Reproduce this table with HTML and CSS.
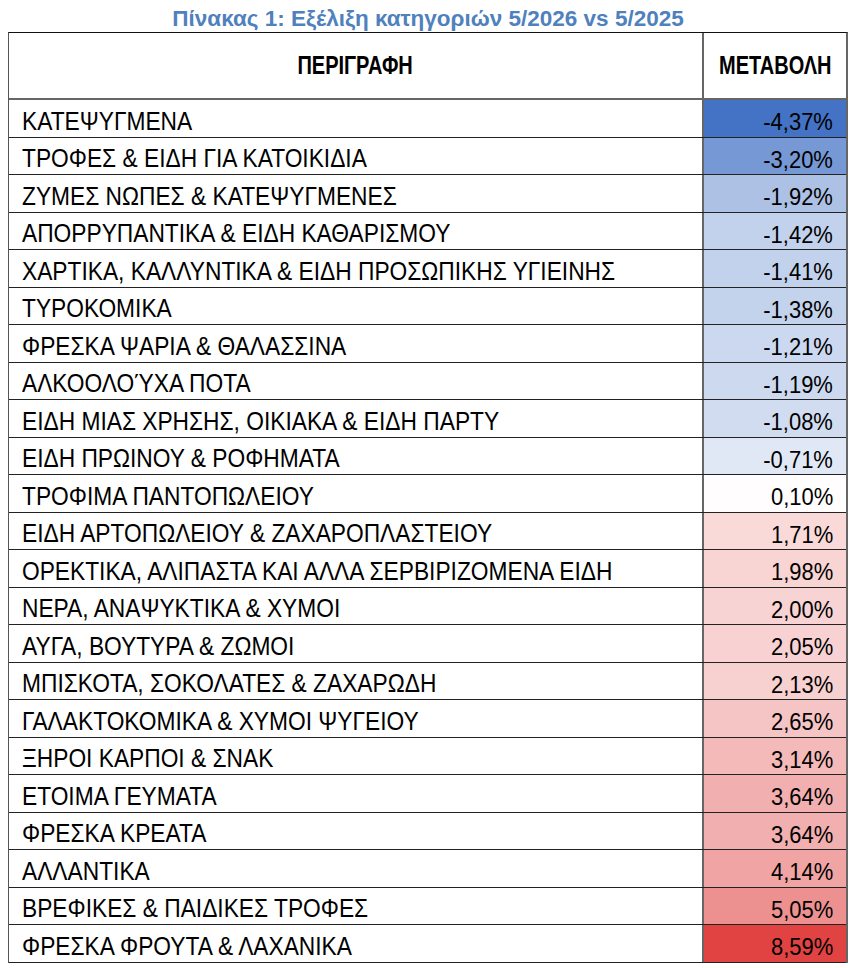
FILE: index.html
```html
<!DOCTYPE html>
<html lang="el">
<head>
<meta charset="utf-8">
<title>Πίνακας 1</title>
<link rel="stylesheet" href="styles.css">
</head>
<body>
<div class="page">
  <h1 class="title">Πίνακας 1: Εξέλιξη κατηγοριών 5/2026 vs 5/2025</h1>
  <div class="table">
    <div class="row head">
      <div class="cell desc"><span class="t">ΠΕΡΙΓΡΑΦΗ</span></div>
      <div class="cell val"><span class="t">ΜΕΤΑΒΟΛΗ</span></div>
    </div>
    <div class="row"><div class="cell desc"><span class="t">ΚΑΤΕΨΥΓΜΕΝΑ</span></div><div class="cell val" style="background:#4472C4"><span class="t">-4,37%</span></div></div>
    <div class="row"><div class="cell desc"><span class="t">ΤΡΟΦΕΣ &amp; ΕΙΔΗ ΓΙΑ ΚΑΤΟΙΚΙΔΙΑ</span></div><div class="cell val" style="background:#7698D4"><span class="t">-3,20%</span></div></div>
    <div class="row"><div class="cell desc"><span class="t">ΖΥΜΕΣ ΝΩΠΕΣ &amp; ΚΑΤΕΨΥΓΜΕΝΕΣ</span></div><div class="cell val" style="background:#ADC1E5"><span class="t">-1,92%</span></div></div>
    <div class="row"><div class="cell desc"><span class="t">ΑΠΟΡΡΥΠΑΝΤΙΚΑ &amp; ΕΙΔΗ ΚΑΘΑΡΙΣΜΟΥ</span></div><div class="cell val" style="background:#C2D1EC"><span class="t">-1,42%</span></div></div>
    <div class="row"><div class="cell desc"><span class="t">ΧΑΡΤΙΚΑ, ΚΑΛΛΥΝΤΙΚΑ &amp; ΕΙΔΗ ΠΡΟΣΩΠΙΚΗΣ ΥΓΙΕΙΝΗΣ</span></div><div class="cell val" style="background:#C3D2EC"><span class="t">-1,41%</span></div></div>
    <div class="row"><div class="cell desc"><span class="t">ΤΥΡΟΚΟΜΙΚΑ</span></div><div class="cell val" style="background:#C4D3EC"><span class="t">-1,38%</span></div></div>
    <div class="row"><div class="cell desc"><span class="t">ΦΡΕΣΚΑ ΨΑΡΙΑ &amp; ΘΑΛΑΣΣΙΝΑ</span></div><div class="cell val" style="background:#CBD8EF"><span class="t">-1,21%</span></div></div>
    <div class="row"><div class="cell desc"><span class="t">ΑΛΚΟΟΛΟΎΧΑ ΠΟΤΑ</span></div><div class="cell val" style="background:#CCD9EF"><span class="t">-1,19%</span></div></div>
    <div class="row"><div class="cell desc"><span class="t">ΕΙΔΗ ΜΙΑΣ ΧΡΗΣΗΣ, ΟΙΚΙΑΚΑ &amp; ΕΙΔΗ ΠΑΡΤΥ</span></div><div class="cell val" style="background:#D1DCF0"><span class="t">-1,08%</span></div></div>
    <div class="row"><div class="cell desc"><span class="t">ΕΙΔΗ ΠΡΩΙΝΟΥ &amp; ΡΟΦΗΜΑΤΑ</span></div><div class="cell val" style="background:#E1E8F5"><span class="t">-0,71%</span></div></div>
    <div class="row"><div class="cell desc"><span class="t">ΤΡΟΦΙΜΑ ΠΑΝΤΟΠΩΛΕΙΟΥ</span></div><div class="cell val" style="background:#FFFDFD"><span class="t">0,10%</span></div></div>
    <div class="row"><div class="cell desc"><span class="t">ΕΙΔΗ ΑΡΤΟΠΩΛΕΙΟΥ &amp; ΖΑΧΑΡΟΠΛΑΣΤΕΙΟΥ</span></div><div class="cell val" style="background:#F9DAD9"><span class="t">1,71%</span></div></div>
    <div class="row"><div class="cell desc"><span class="t">ΟΡΕΚΤΙΚΑ, ΑΛΙΠΑΣΤΑ ΚΑΙ ΑΛΛΑ ΣΕΡΒΙΡΙΖΟΜΕΝΑ ΕΙΔΗ</span></div><div class="cell val" style="background:#F8D4D3"><span class="t">1,98%</span></div></div>
    <div class="row"><div class="cell desc"><span class="t">ΝΕΡΑ, ΑΝΑΨΥΚΤΙΚΑ &amp; ΧΥΜΟΙ</span></div><div class="cell val" style="background:#F8D3D3"><span class="t">2,00%</span></div></div>
    <div class="row"><div class="cell desc"><span class="t">ΑΥΓΑ, ΒΟΥΤΥΡΑ &amp; ΖΩΜΟΙ</span></div><div class="cell val" style="background:#F8D2D2"><span class="t">2,05%</span></div></div>
    <div class="row"><div class="cell desc"><span class="t">ΜΠΙΣΚΟΤΑ, ΣΟΚΟΛΑΤΕΣ &amp; ΖΑΧΑΡΩΔΗ</span></div><div class="cell val" style="background:#F7D0D0"><span class="t">2,13%</span></div></div>
    <div class="row"><div class="cell desc"><span class="t">ΓΑΛΑΚΤΟΚΟΜΙΚΑ &amp; ΧΥΜΟΙ ΨΥΓΕΙΟΥ</span></div><div class="cell val" style="background:#F5C5C5"><span class="t">2,65%</span></div></div>
    <div class="row"><div class="cell desc"><span class="t">ΞΗΡΟΙ ΚΑΡΠΟΙ &amp; ΣΝΑΚ</span></div><div class="cell val" style="background:#F4BABA"><span class="t">3,14%</span></div></div>
    <div class="row"><div class="cell desc"><span class="t">ΕΤΟΙΜΑ ΓΕΥΜΑΤΑ</span></div><div class="cell val" style="background:#F2AFAF"><span class="t">3,64%</span></div></div>
    <div class="row"><div class="cell desc"><span class="t">ΦΡΕΣΚΑ ΚΡΕΑΤΑ</span></div><div class="cell val" style="background:#F2AFAF"><span class="t">3,64%</span></div></div>
    <div class="row"><div class="cell desc"><span class="t">ΑΛΛΑΝΤΙΚΑ</span></div><div class="cell val" style="background:#F0A4A4"><span class="t">4,14%</span></div></div>
    <div class="row"><div class="cell desc"><span class="t">ΒΡΕΦΙΚΕΣ &amp; ΠΑΙΔΙΚΕΣ ΤΡΟΦΕΣ</span></div><div class="cell val" style="background:#ED9190"><span class="t">5,05%</span></div></div>
    <div class="row"><div class="cell desc"><span class="t">ΦΡΕΣΚΑ ΦΡΟΥΤΑ &amp; ΛΑΧΑΝΙΚΑ</span></div><div class="cell val" style="background:#E04342"><span class="t">8,59%</span></div></div>
  </div>
</div>
</body>
</html>
```

FILE: styles.css
```css
html, body {
  margin: 0;
  padding: 0;
  background: #ffffff;
}

body {
  font-family: "Liberation Sans", Arial, sans-serif;
  color: #000000;
}

.page {
  width: 840px;
  padding-left: 8px;
}

.title {
  margin: 0;
  height: 32px;
  box-sizing: border-box;
  padding-top: 5px;
  font-size: 22.5px;
  line-height: 27px;
  font-weight: bold;
  color: #4F81BD;
  text-align: center;
  white-space: nowrap;
}

.table {
  width: 840px;
  box-sizing: border-box;
  border-top: 1px solid #111111;
  border-left: 1px solid #555555;
  border-right: 2px solid #666666;
}

.row {
  display: grid;
  grid-template-columns: 693px 1fr;
  height: 37.5px;
  box-sizing: border-box;
  border-bottom: 1px solid #222222;
}

.cell {
  display: flex;
  align-items: flex-end;
  min-width: 0;
  white-space: nowrap;
}

.desc {
  padding-left: 13px;
}

.desc .t {
  display: inline-block;
  font-size: 26px;
  line-height: 1.15;
  transform: scaleX(0.875);
  transform-origin: left center;
}

.val {
  border-left: 2px solid #666666;
  justify-content: flex-end;
  padding-right: 13px;
  padding-bottom: 1px;
}

.val .t {
  display: inline-block;
  font-size: 23px;
  line-height: 1.15;
  transform: scaleX(0.955);
  transform-origin: right center;
}

.row.head {
  height: 67px;
  border-bottom: 2px solid #666666;
}

.head .cell {
  align-items: center;
  justify-content: center;
  padding: 0;
}

.head .t,
.head .desc .t,
.head .val .t {
  font-size: 25px;
  font-weight: bold;
  line-height: 1.15;
  transform: scaleX(0.8);
  transform-origin: center center;
}
```
